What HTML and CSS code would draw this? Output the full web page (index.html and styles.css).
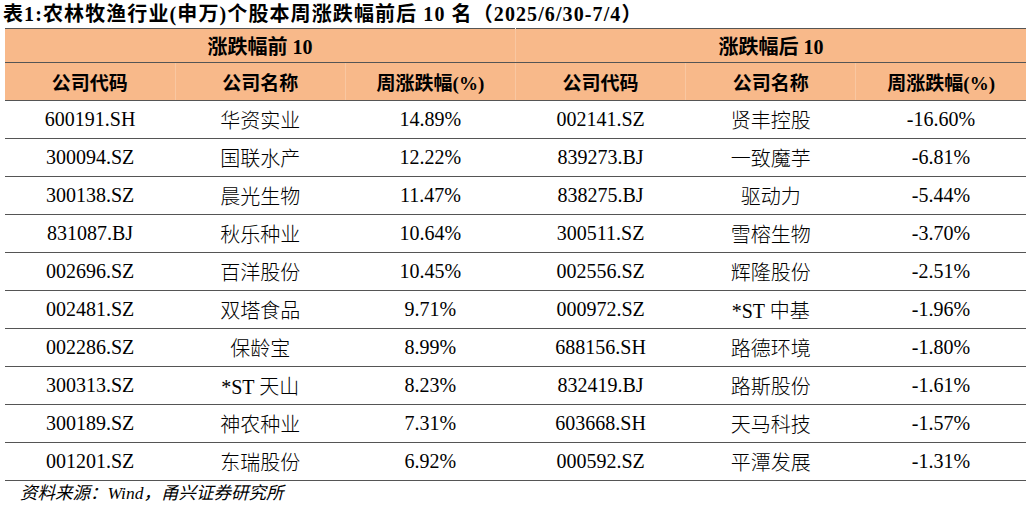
FILE: index.html
```html
<!DOCTYPE html>
<html lang="zh">
<head>
<meta charset="utf-8">
<link rel="stylesheet" href="styles.css">
</head>
<body>
<div class="page">
  <div class="title">表1:农林牧渔行业(申万)个股本周涨跌幅前后 10 名（2025/6/30-7/4）</div>
  <table class="tbl">
    <colgroup>
      <col class="c"><col class="c"><col class="c"><col class="c"><col class="c"><col class="c">
    </colgroup>
    <thead>
      <tr class="group">
        <th colspan="3">涨跌幅前 10</th>
        <th colspan="3">涨跌幅后 10</th>
      </tr>
      <tr class="head">
        <th>公司代码</th><th>公司名称</th><th>周涨跌幅(%)</th>
        <th>公司代码</th><th>公司名称</th><th>周涨跌幅(%)</th>
      </tr>
    </thead>
    <tbody>
      <tr><td>600191.SH</td><td>华资实业</td><td>14.89%</td><td>002141.SZ</td><td>贤丰控股</td><td>-16.60%</td></tr>
      <tr><td>300094.SZ</td><td>国联水产</td><td>12.22%</td><td>839273.BJ</td><td>一致魔芋</td><td>-6.81%</td></tr>
      <tr><td>300138.SZ</td><td>晨光生物</td><td>11.47%</td><td>838275.BJ</td><td>驱动力</td><td>-5.44%</td></tr>
      <tr><td>831087.BJ</td><td>秋乐种业</td><td>10.64%</td><td>300511.SZ</td><td>雪榕生物</td><td>-3.70%</td></tr>
      <tr><td>002696.SZ</td><td>百洋股份</td><td>10.45%</td><td>002556.SZ</td><td>辉隆股份</td><td>-2.51%</td></tr>
      <tr><td>002481.SZ</td><td>双塔食品</td><td>9.71%</td><td>000972.SZ</td><td>*ST 中基</td><td>-1.96%</td></tr>
      <tr><td>002286.SZ</td><td>保龄宝</td><td>8.99%</td><td>688156.SH</td><td>路德环境</td><td>-1.80%</td></tr>
      <tr><td>300313.SZ</td><td>*ST 天山</td><td>8.23%</td><td>832419.BJ</td><td>路斯股份</td><td>-1.61%</td></tr>
      <tr><td>300189.SZ</td><td>神农种业</td><td>7.31%</td><td>603668.SH</td><td>天马科技</td><td>-1.57%</td></tr>
      <tr><td>001201.SZ</td><td>东瑞股份</td><td>6.92%</td><td>000592.SZ</td><td>平潭发展</td><td>-1.31%</td></tr>
    </tbody>
  </table>
  <div class="source">资料来源：Wind，甬兴证券研究所</div>
</div>
</body>
</html>
```
FILE: styles.css
```css
html, body {
  margin: 0;
  padding: 0;
  background: #ffffff;
}
.page {
  width: 1032px;
  height: 505px;
  font-family: "Liberation Serif", "Noto Sans CJK SC", serif;
  color: #000;
}
.title {
  height: 28px;
  line-height: 28px;
  padding-left: 3px;
  font-size: 20px;
  font-weight: bold;
  white-space: nowrap;
  letter-spacing: 1.1px;
}
.tbl {
  margin-left: 5px;
  width: 1021px;
  border-collapse: collapse;
  table-layout: fixed;
  border-top: 1.5px solid #555;
  border-bottom: 1.5px solid #555;
}
.c { width: 170px; }
.tbl th {
  background: #f8b98a;
  font-weight: bold;
  font-size: 19px;
  padding: 0;
  text-align: center;
  border-left: 1px solid rgba(255, 255, 255, 0.2);
}
.tbl th:first-child { border-left: none; }
.group th {
  height: 33px;
  font-size: 20px;
  border-bottom: 1.5px solid #555;
}
.head th {
  height: 37px;
  border-bottom: 1.5px solid #555;
}
.tbl td {
  height: 37px;
  padding: 0;
  text-align: center;
  font-size: 20px;
  font-weight: 300;
  border-bottom: 1.5px solid #555;
  white-space: nowrap;
}
.tbl tbody tr:last-child td { border-bottom: none; }
.source {
  padding-left: 20px;
  font-size: 17.5px;
  font-style: italic;
  line-height: 24px;
  margin-top: 0;
}
```
